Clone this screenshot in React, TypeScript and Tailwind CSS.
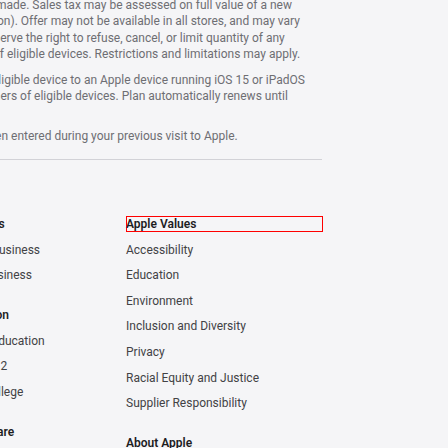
import React from 'react';

const footnoteLines: { text: string; indent: string }[][] = [
  [
    { text: 'made. Sales tax may be assessed on full value of a new', indent: '-ml-[4px]' },
    { text: 'on). Offer may not be available in all stores, and may vary', indent: '-ml-[3px]' },
    { text: 'serve the right to refuse, cancel, or limit quantity of any', indent: '-ml-[6px]' },
    { text: 'of eligible devices. Restrictions and limitations may apply.', indent: '-ml-[7px]' },
  ],
  [
    { text: 'eligible device to an Apple device running iOS 15 or iPadOS', indent: '-ml-[8px]' },
    { text: 'owners of eligible devices. Plan automatically renews until', indent: '-ml-[22px]' },
  ],
  [{ text: 'been entered during your previous visit to Apple.', indent: '-ml-[18px]' }],
];

const columns = [
  [
    { title: 'For Business', links: ['Apple and Business', 'Shop for Business'] },
    { title: 'For Education', links: ['Apple and Education', 'Shop for K-12', 'Shop for College'] },
    { title: 'For Healthcare', links: ['Apple in Healthcare', 'Health on Apple Watch'] },
  ],
  [
    {
      title: 'Apple Values',
      links: [
        'Accessibility',
        'Education',
        'Environment',
        'Inclusion and Diversity',
        'Privacy',
        'Racial Equity and Justice',
        'Supplier Responsibility',
      ],
    },
    { title: 'About Apple', links: ['Newsroom', 'Apple Leadership'] },
  ],
];

const App: React.FC = () => {
  return (
    <div className="w-[448px] h-[448px] overflow-hidden bg-[#f5f5f7] font-['Roboto',sans-serif] text-[12px]">
      <div className="w-[322px] -mt-[3px]">
        {/* footnotes */}
        <div className="flex flex-col text-[#6e6e73] leading-[16.33px]">
          {footnoteLines.map((para, pi) => (
            <div key={pi} className={pi === 0 ? '' : pi === 1 ? 'mt-[9.67px]' : 'mt-[23px]'}>
              {para.map((line, li) => (
                <div key={li} className={`whitespace-nowrap h-[16.33px] ${line.indent}`}>
                  {line.text}
                </div>
              ))}
            </div>
          ))}
        </div>
        <div className="mt-[15px] border-t border-[#d2d2d7]"></div>

        {/* directory */}
        <div className="grid grid-cols-[191px_197px] -ml-[65px] mt-[56px] leading-[16px]">
          {columns.map((col, ci) => (
            <div key={ci} className="flex flex-col gap-[24px]">
              {col.map((sec) => (
                <div key={sec.title} className="flex flex-col gap-[9.6px]">
                  <h3
                    className={`font-semibold text-[#1d1d1f] whitespace-nowrap ${
                      sec.title === 'Apple Values' ? 'ring-1 ring-inset ring-[#ff0000]' : ''
                    }`}
                  >
                    {sec.title}
                  </h3>
                  {sec.links.map((l) => (
                    <a key={l} className="text-[#424245] whitespace-nowrap">
                      {l}
                    </a>
                  ))}
                </div>
              ))}
            </div>
          ))}
        </div>
      </div>
    </div>
  );
};

export default App;
